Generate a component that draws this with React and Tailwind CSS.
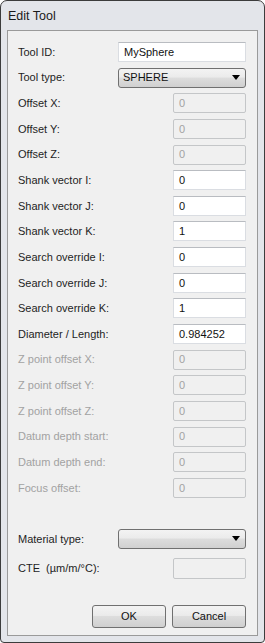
import React from "react";

const rows = [
  { label: "Tool ID:", kind: "text", value: "MySphere", wide: true },
  { label: "Tool type:", kind: "combo", value: "SPHERE" },
  { label: "Offset X:", kind: "disabled", value: "0" },
  { label: "Offset Y:", kind: "disabled", value: "0" },
  { label: "Offset Z:", kind: "disabled", value: "0" },
  { label: "Shank vector I:", kind: "text", value: "0" },
  { label: "Shank vector J:", kind: "text", value: "0" },
  { label: "Shank vector K:", kind: "text", value: "1" },
  { label: "Search override I:", kind: "text", value: "0" },
  { label: "Search override J:", kind: "text", value: "0" },
  { label: "Search override K:", kind: "text", value: "1" },
  { label: "Diameter / Length:", kind: "text", value: "0.984252" },
  { label: "Z point offset X:", kind: "disabled", value: "0", grey: true },
  { label: "Z point offset Y:", kind: "disabled", value: "0", grey: true },
  { label: "Z point offset Z:", kind: "disabled", value: "0", grey: true },
  { label: "Datum depth start:", kind: "disabled", value: "0", grey: true },
  { label: "Datum depth end:", kind: "disabled", value: "0", grey: true },
  { label: "Focus offset:", kind: "disabled", value: "0", grey: true },
];

/* ===== small win7 style controls ===== */
const TextBox = ({ value, wide }) => (
  <div
    className={`h-[20px] ${wide ? "w-[128px]" : "w-[73px]"} bg-white border border-[#dadde2] border-t-[#b9bcc1] flex items-center pl-[5px] text-[#111]`}
  >
    {value}
  </div>
);

const DisabledBox = ({ value, h = "h-[20px]" }) => (
  <div
    className={`${h} w-[73px] bg-[#f0f0f0] border border-[#c4c6c8] rounded-[2px] flex items-center pl-[5px] text-[#a3a3a3]`}
  >
    {value}
  </div>
);

const Combo = ({ value }) => (
  <div className="h-[20px] w-[128px] rounded-[3px] border border-[#707070] bg-[linear-gradient(#f3f3f3,#ebebeb_45%,#dddddd_50%,#d0d0d0)] flex items-center justify-between pl-[4px] pr-[5px] text-[#111]">
    <span>{value}</span>
    <svg width="8" height="5" viewBox="0 0 8 5">
      <path d="M0 0H8L4 5Z" fill="#000" />
    </svg>
  </div>
);

const Button = ({ children }) => (
  <div className="h-[23px] w-[74px] rounded-[3px] border border-[#707070] bg-[linear-gradient(#f3f3f3,#ebebeb_45%,#dddddd_50%,#cfcfcf)] flex items-center justify-center text-[#111]">
    {children}
  </div>
);

export default function App() {
  return (
    <div className="w-[265px] h-[643px] bg-[#e3e5ea] border border-[#3c3c3c] rounded-t-[7px] rounded-b-[4px] flex flex-col px-[6px] pb-[6px] font-['Liberation_Sans',Arial,sans-serif]">
      {/* ===== TITLE ===== */}
      <div className="h-[29px] shrink-0 flex items-center pl-[1px] pt-[1px] text-[12.5px] text-[#1a1a1a]">
        Edit Tool
      </div>

      {/* ===== PANEL ===== */}
      <div className="flex-1 bg-[#f0f0f0] border border-[#9a9a9a] pt-[11px] pl-[10px] pr-[11px] flex flex-col text-[11px]">
        <div className="flex flex-col gap-[5.65px]">
          {rows.map((row) => (
            <div key={row.label} className="flex items-center justify-between h-[20px]">
              <span className={row.grey ? "text-[#a2a2a2]" : "text-[#1e1e1e]"}>{row.label}</span>
              {row.kind === "text" && <TextBox value={row.value} wide={row.wide} />}
              {row.kind === "combo" && <Combo value={row.value} />}
              {row.kind === "disabled" && <DisabledBox value={row.value} />}
            </div>
          ))}
        </div>

        <div className="flex items-center justify-between h-[20px] mt-[31px]">
          <span className="text-[#1e1e1e]">Material type:</span>
          <Combo value="" />
        </div>

        <div className="flex items-center justify-between h-[21px] mt-[9px]">
          <span className="text-[#1e1e1e]">CTE&nbsp;&nbsp;(µm/m/°C):</span>
          <DisabledBox value="" h="h-[21px]" />
        </div>

        {/* ===== BUTTONS ===== */}
        <div className="flex justify-end gap-[6px] mt-[26px]">
          <Button>OK</Button>
          <Button>Cancel</Button>
        </div>
      </div>
    </div>
  );
}
